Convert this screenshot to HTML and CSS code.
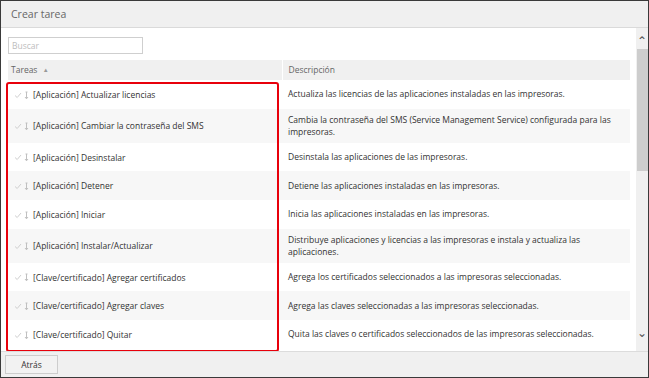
FILE: index.html
```html
<!DOCTYPE html>
<html lang="es">
<head>
    <meta charset="UTF-8">
    <title>Crear tarea</title>
    <link rel="stylesheet" href="styles.css">
</head>
<body>
    <div class="dialog">
        <div class="dialog-header">Crear tarea</div>

        <div class="dialog-body">
            <div class="content">
                <input type="text" class="search" placeholder="Buscar">
                <table class="tasks">
                    <thead>
                        <tr>
                            <th class="col-task">Tareas <span class="sort">&#9650;</span></th>
                            <th>Descripción</th>
                        </tr>
                    </thead>
                    <tbody id="task-rows"></tbody>
                </table>
            </div>
            <div class="scrollbar">
                <span class="arrow">&#8963;</span>
                <div class="thumb"></div>
                <span class="arrow down">&#8964;</span>
            </div>
            <!-- highlight frame drawn over the task column -->
            <div class="highlight"></div>
        </div>

        <div class="dialog-footer">
            <button class="btn">Atrás</button>
        </div>
    </div>

    <script>
        const tasks = [
            ['[Aplicación] Actualizar licencias', 'Actualiza las licencias de las aplicaciones instaladas en las impresoras.'],
            ['[Aplicación] Cambiar la contraseña del SMS', 'Cambia la contraseña del SMS (Service Management Service) configurada para las impresoras.'],
            ['[Aplicación] Desinstalar', 'Desinstala las aplicaciones de las impresoras.'],
            ['[Aplicación] Detener', 'Detiene las aplicaciones instaladas en las impresoras.'],
            ['[Aplicación] Iniciar', 'Inicia las aplicaciones instaladas en las impresoras.'],
            ['[Aplicación] Instalar/Actualizar', 'Distribuye aplicaciones y licencias a las impresoras e instala y actualiza las aplicaciones.'],
            ['[Clave/certificado] Agregar certificados', 'Agrega los certificados seleccionados a las impresoras seleccionadas.'],
            ['[Clave/certificado] Agregar claves', 'Agrega las claves seleccionadas a las impresoras seleccionadas.'],
            ['[Clave/certificado] Quitar', 'Quita las claves o certificados seleccionados de las impresoras seleccionadas.']
        ];

        const icons = `
            <svg class="ico" width="18" height="10" viewBox="0 0 18 10">
                <path d="M1 5.5 L3.2 7.5 L7 3" fill="none" stroke="#d0d0d0" stroke-width="1"/>
                <path d="M12.5 2 L12.5 8.5 M11 7 L12.5 8.8 L14 7 M11.5 2 L13.5 2" fill="none" stroke="#c0c0c0" stroke-width="1"/>
            </svg>`;

        let rowsHtml = '';
        tasks.forEach(([name, desc]) => {
            rowsHtml += `<tr><td class="col-task">${icons}<span>${name}</span></td><td>${desc}</td></tr>`;
        });
        document.getElementById('task-rows').innerHTML = rowsHtml;
    </script>
</body>
</html>
```

FILE: styles.css
```css
/* Global styling */
* { box-sizing: border-box; margin: 0; padding: 0; }
body { font-family: "Open Sans", "Noto Sans", sans-serif; color: #333; background: #fff; }

/* Dialog frame */
.dialog { width: 649px; height: 378px; border: 1px solid #3a3a3a; display: flex; flex-direction: column; background: #fff; }
.dialog-header { height: 27px; flex: none; background: #f0f0f0; border-bottom: 1px solid #dadada; padding-left: 10px; font-size: 10.5px; line-height: 26px; color: #666; }
.dialog-body { flex: 1; min-height: 0; display: flex; position: relative; overflow: hidden; }
.dialog-footer { height: 26px; flex: none; background: #f0f0f0; border-top: 1px solid #dcdcdc; padding: 3px 4px; display: flex; align-items: flex-start; }

/* Content */
.content { flex: 1; padding: 9px 5px 0 7px; overflow: hidden; }
.search { display: block; width: 135px; height: 17px; border: 1px solid #cfcfcf; padding: 0 3px; font-family: inherit; font-size: 8.5px; color: #333; margin-bottom: 6px; }
.search::placeholder { color: #bdbdbd; }

/* Task table */
.tasks { width: 622px; border-collapse: collapse; table-layout: fixed; font-size: 8.5px; line-height: 12px; }
.tasks th { height: 20px; background: #f0f0f0; color: #666; font-weight: normal; text-align: left; padding: 0 6px; border-left: 1px solid #fff; }
.tasks th:first-child { border-left: none; }
.tasks th.col-task { width: 274px; padding-left: 3px; }
.tasks .sort { font-size: 6px; color: #999; vertical-align: 1px; margin-left: 3px; }
.tasks td { height: 28.7px; padding: 5px 6px; vertical-align: middle; }
.tasks tbody tr:nth-child(even) { background: #f7f7f7; }
.tasks td.col-task { padding-left: 6px; white-space: nowrap; }
.tasks td.col-task span { vertical-align: middle; }
.ico { vertical-align: middle; margin-right: 1px; }

/* Scrollbar */
.scrollbar { width: 12px; flex: none; background: #f0f0f0; display: flex; flex-direction: column; align-items: center; }
.scrollbar .arrow { height: 21px; font-size: 12px; line-height: 26px; color: #555; }
.scrollbar .arrow.down { margin-top: auto; height: 24px; line-height: 12px; }
.scrollbar .thumb { width: 11px; height: 122px; background: #cdcdcd; margin-left: 1px; }

/* Highlight frame */
.highlight { position: absolute; left: 5px; top: 54px; width: 273px; height: 270px; border: 2px solid #e8000b; border-radius: 3px; pointer-events: none; }

/* Buttons */
.btn { width: 53px; height: 19px; border: 1px solid #cdcdcd; background: #f2f2f2; font-family: inherit; font-size: 8.5px; color: #333; }
```
